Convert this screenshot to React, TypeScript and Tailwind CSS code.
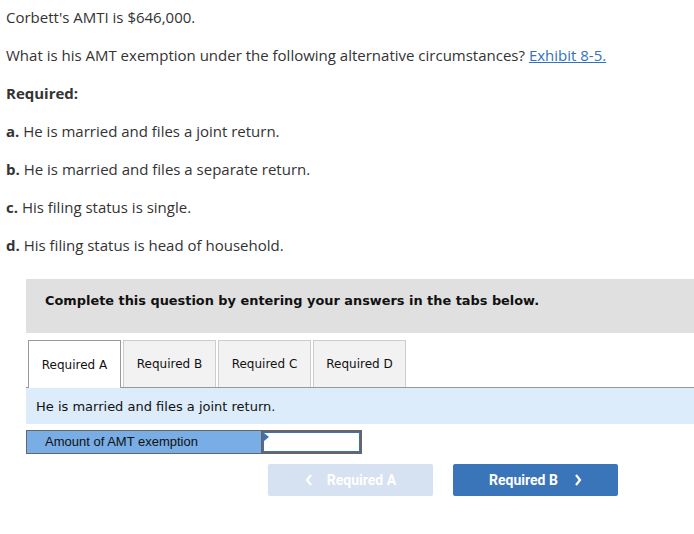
import React from "react";

export default function App() {
  const body = { fontFamily: "'Open Sans', Lato, sans-serif" };
  const verd = { fontFamily: "'DejaVu Sans', Verdana, sans-serif" };
  return (
    <div className="w-[694px] h-[534px] bg-white text-[#333333] overflow-hidden">
      <div className="flex flex-col gap-[18px] pt-[7px] pl-[6px] text-[15px]" style={body}>
        <div className="h-[20px] leading-[20px]">Corbett's AMTI is $646,000.</div>
        <div className="h-[20px] leading-[20px]">
          What is his AMT exemption under the following alternative circumstances?{" "}
          <span className="text-[#2f72c4] underline">Exhibit 8-5.</span>
        </div>
        <div className="h-[20px] leading-[20px] font-bold">Required:</div>
        <div className="h-[20px] leading-[20px]"><b>a.</b> He is married and files a joint return.</div>
        <div className="h-[20px] leading-[20px]"><b>b.</b> He is married and files a separate return.</div>
        <div className="h-[20px] leading-[20px]"><b>c.</b> His filing status is single.</div>
        <div className="h-[20px] leading-[20px]"><b>d.</b> His filing status is head of household.</div>
      </div>

      <div className="ml-[26px] mt-[24px]">
        <div className="h-[54px] bg-[#e0e0e0] pt-[14px] pl-[19px] text-[12.9px] leading-[16px] font-bold text-[#111]" style={verd}>
          Complete this question by entering your answers in the tabs below.
        </div>

        <div className="mt-[7px] flex gap-[2px] pl-[2px] border-b border-[#999] h-[48px] items-end">
          <div className="w-[93px] h-[48px] -mb-[1px] bg-white border border-[#999] border-b-0 flex items-center justify-center text-[12px] text-[#111]" style={verd}>Required A</div>
          <div className="w-[93px] h-[47px] bg-[#f2f2f2] border border-[#ccc] border-b-0 flex items-center justify-center text-[12px] text-[#111]" style={verd}>Required B</div>
          <div className="w-[93px] h-[47px] bg-[#f2f2f2] border border-[#ccc] border-b-0 flex items-center justify-center text-[12px] text-[#111]" style={verd}>Required C</div>
          <div className="w-[93px] h-[47px] bg-[#f2f2f2] border border-[#ccc] border-b-0 flex items-center justify-center text-[12px] text-[#111]" style={verd}>Required D</div>
        </div>

        <div className="h-[36px] bg-[#dcecfa] flex items-center pl-[10px] pt-[2px] text-[13px] text-[#111]" style={verd}>
          He is married and files a joint return.
        </div>

        <div className="mt-[6px] flex h-[24px]">
          <div className="w-[235px] h-[24px] bg-[#79ade5] border border-[#666] border-r-0 flex items-center pl-[18px] text-[13px] text-[#111]" style={{ fontFamily: "'Liberation Sans', Arial, sans-serif" }}>
            Amount of AMT exemption
          </div>
          <div className="relative w-[101px] h-[24px] border-[2px] border-[#666]">
            <div className="w-full h-full border border-[#3b73b9] bg-white" />
            <div className="absolute left-[1px] top-[1px] w-0 h-0 border-t-[4px] border-b-[4px] border-l-[5px] border-t-transparent border-b-transparent border-l-[#3b73b9]" />
          </div>
        </div>

        <div className="mt-[10px] flex gap-[20px] pl-[242px]" style={{ fontFamily: "Roboto, sans-serif" }}>
          <div className="w-[165px] h-[32px] rounded-[2px] bg-[#d6e2f1] text-white font-bold text-[14px] flex items-center justify-center gap-[14px]">
            <svg width="8" height="12" viewBox="0 0 8 12"><path d="M6 1 L2 6 L6 11" stroke="white" strokeWidth="2.2" fill="none" /></svg>
            <span>Required A</span>
          </div>
          <div className="w-[165px] h-[32px] rounded-[2px] bg-[#3a74b9] text-white font-bold text-[14px] flex items-center justify-center gap-[16px]">
            <span>Required B</span>
            <svg width="8" height="12" viewBox="0 0 8 12"><path d="M2 1 L6 6 L2 11" stroke="white" strokeWidth="2.2" fill="none" /></svg>
          </div>
        </div>
      </div>
    </div>
  );
}
